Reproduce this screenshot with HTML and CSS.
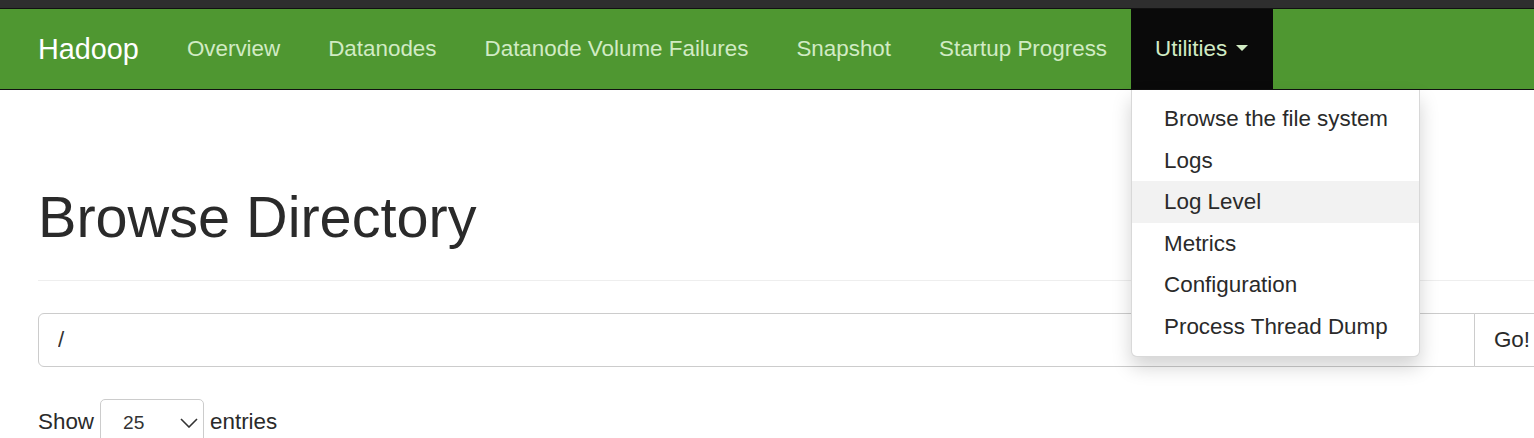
FILE: index.html
```html
<!DOCTYPE html>
<html>
<head>
<meta charset="utf-8">
<title>Browse Directory</title>
<link rel="stylesheet" href="styles.css">
</head>
<body>
<div class="topstrip"></div>
<nav class="navbar">
  <a class="brand" href="#">Hadoop</a>
  <ul class="nav">
    <li><a href="#">Overview</a></li>
    <li><a href="#">Datanodes</a></li>
    <li><a href="#">Datanode Volume Failures</a></li>
    <li><a href="#">Snapshot</a></li>
    <li><a href="#">Startup Progress</a></li>
    <li class="dropdown open">
      <a href="#" class="toggle">Utilities <span class="caret"></span></a>
      <ul class="menu">
        <li><a href="#">Browse the file system</a></li>
        <li><a href="#">Logs</a></li>
        <li class="hover"><a href="#">Log Level</a></li>
        <li><a href="#">Metrics</a></li>
        <li><a href="#">Configuration</a></li>
        <li><a href="#">Process Thread Dump</a></li>
      </ul>
    </li>
  </ul>
</nav>
<main class="content">
  <div class="page-header">
    <h1>Browse Directory</h1>
  </div>
  <div class="input-group">
    <input class="path" type="text" value="/">
    <button class="go" type="button">Go!</button>
  </div>
  <div class="length">
    <span>Show</span>
    <span class="select">
      <span class="val">25</span>
      <svg class="chev" width="18" height="10" viewBox="0 0 18 10"><path d="M1 1 L9 9 L17 1" fill="none" stroke="#333" stroke-width="1.6"/></svg>
    </span>
    <span>entries</span>
  </div>
</main>
</body>
</html>
```

FILE: styles.css
```css
html, body {
  margin: 0;
  padding: 0;
  overflow: hidden;
  background: #fff;
}
body {
  font-family: "Liberation Sans", Arial, Helvetica, sans-serif;
  font-size: 22.4px;
  color: #2a2a2a;
  width: 1534px;
  height: 438px;
}
.topstrip {
  height: 8px;
  background: #2e2e2e;
  border-bottom: 1px solid #111;
}
.navbar {
  display: flex;
  align-items: stretch;
  height: 80px;
  background: #4f9731;
  border-bottom: 1px solid #111;
  padding-left: 14px;
}
.brand {
  font-size: 28.8px;
  line-height: 80px;
  padding: 0 24px;
  color: #fff;
  text-decoration: none;
}
.nav {
  display: flex;
  list-style: none;
  margin: 0;
  padding: 0;
}
.nav > li {
  position: relative;
}
.nav > li > a {
  display: flex;
  align-items: center;
  height: 80px;
  padding: 0 24px;
  color: #d1ebc4;
  text-decoration: none;
  white-space: nowrap;
}
.nav > li.open > a {
  background: #0a0a0a;
  padding-right: 25px;
}
.caret {
  display: inline-block;
  width: 0;
  height: 0;
  border-top: 6.4px solid #d1ebc4;
  border-left: 6.4px solid transparent;
  border-right: 6.4px solid transparent;
  margin-left: 9px;
  margin-bottom: 3px;
}
.menu {
  position: absolute;
  top: 100%;
  margin-top: 1px;
  left: 0;
  width: 287px;
  list-style: none;
  margin-left: 0;
  padding: 8px 0;
  background: #fff;
  border: 1px solid rgba(0,0,0,0.15);
  border-top: 0;
  border-radius: 0 0 6px 6px;
  box-shadow: 0 10px 19px rgba(0,0,0,0.175);
  z-index: 10;
}
.menu li a {
  display: block;
  padding: 0 32px;
  height: 41.6px;
  line-height: 41.6px;
  color: #2a2a2a;
  text-decoration: none;
  white-space: nowrap;
}
.menu li.hover a {
  background: #f2f2f2;
}
.content {
  width: 1512px;
  padding: 0 0 0 38px;
}
.page-header {
  margin: 96px 0 32px;
  padding-bottom: 14.4px;
  border-bottom: 1px solid #eee;
}
h1 {
  margin: 0 0 16px;
  font-size: 57.6px;
  line-height: 1.1;
  font-weight: 400;
  color: #2a2a2a;
}
.input-group {
  display: flex;
  height: 54px;
}
.path {
  flex: 1;
  min-width: 0;
  height: 54px;
  box-sizing: border-box;
  border: 1px solid #ccc;
  border-radius: 6px 0 0 6px;
  padding: 0 19px;
  font-family: inherit;
  font-size: 22.4px;
  color: #333;
  outline: none;
}
.go {
  height: 54px;
  box-sizing: border-box;
  margin-left: -1px;
  border: 1px solid #ccc;
  border-radius: 0 6px 6px 0;
  background: #fff;
  padding: 0 19px;
  font-family: inherit;
  font-size: 22.4px;
  color: #2a2a2a;
}
.length {
  display: flex;
  align-items: baseline;
  gap: 6px;
  margin-top: 32px;
}
.select {
  position: relative;
  display: inline-flex;
  align-items: baseline;
  box-sizing: border-box;
  width: 104px;
  height: 48px;
  border: 1px solid #ccc;
  border-radius: 5px;
  padding-left: 22px;
  font-size: 19.2px;
  line-height: 46px;
  color: #333;
}
.chev {
  position: absolute;
  left: 79px;
  top: 18px;
}
```
